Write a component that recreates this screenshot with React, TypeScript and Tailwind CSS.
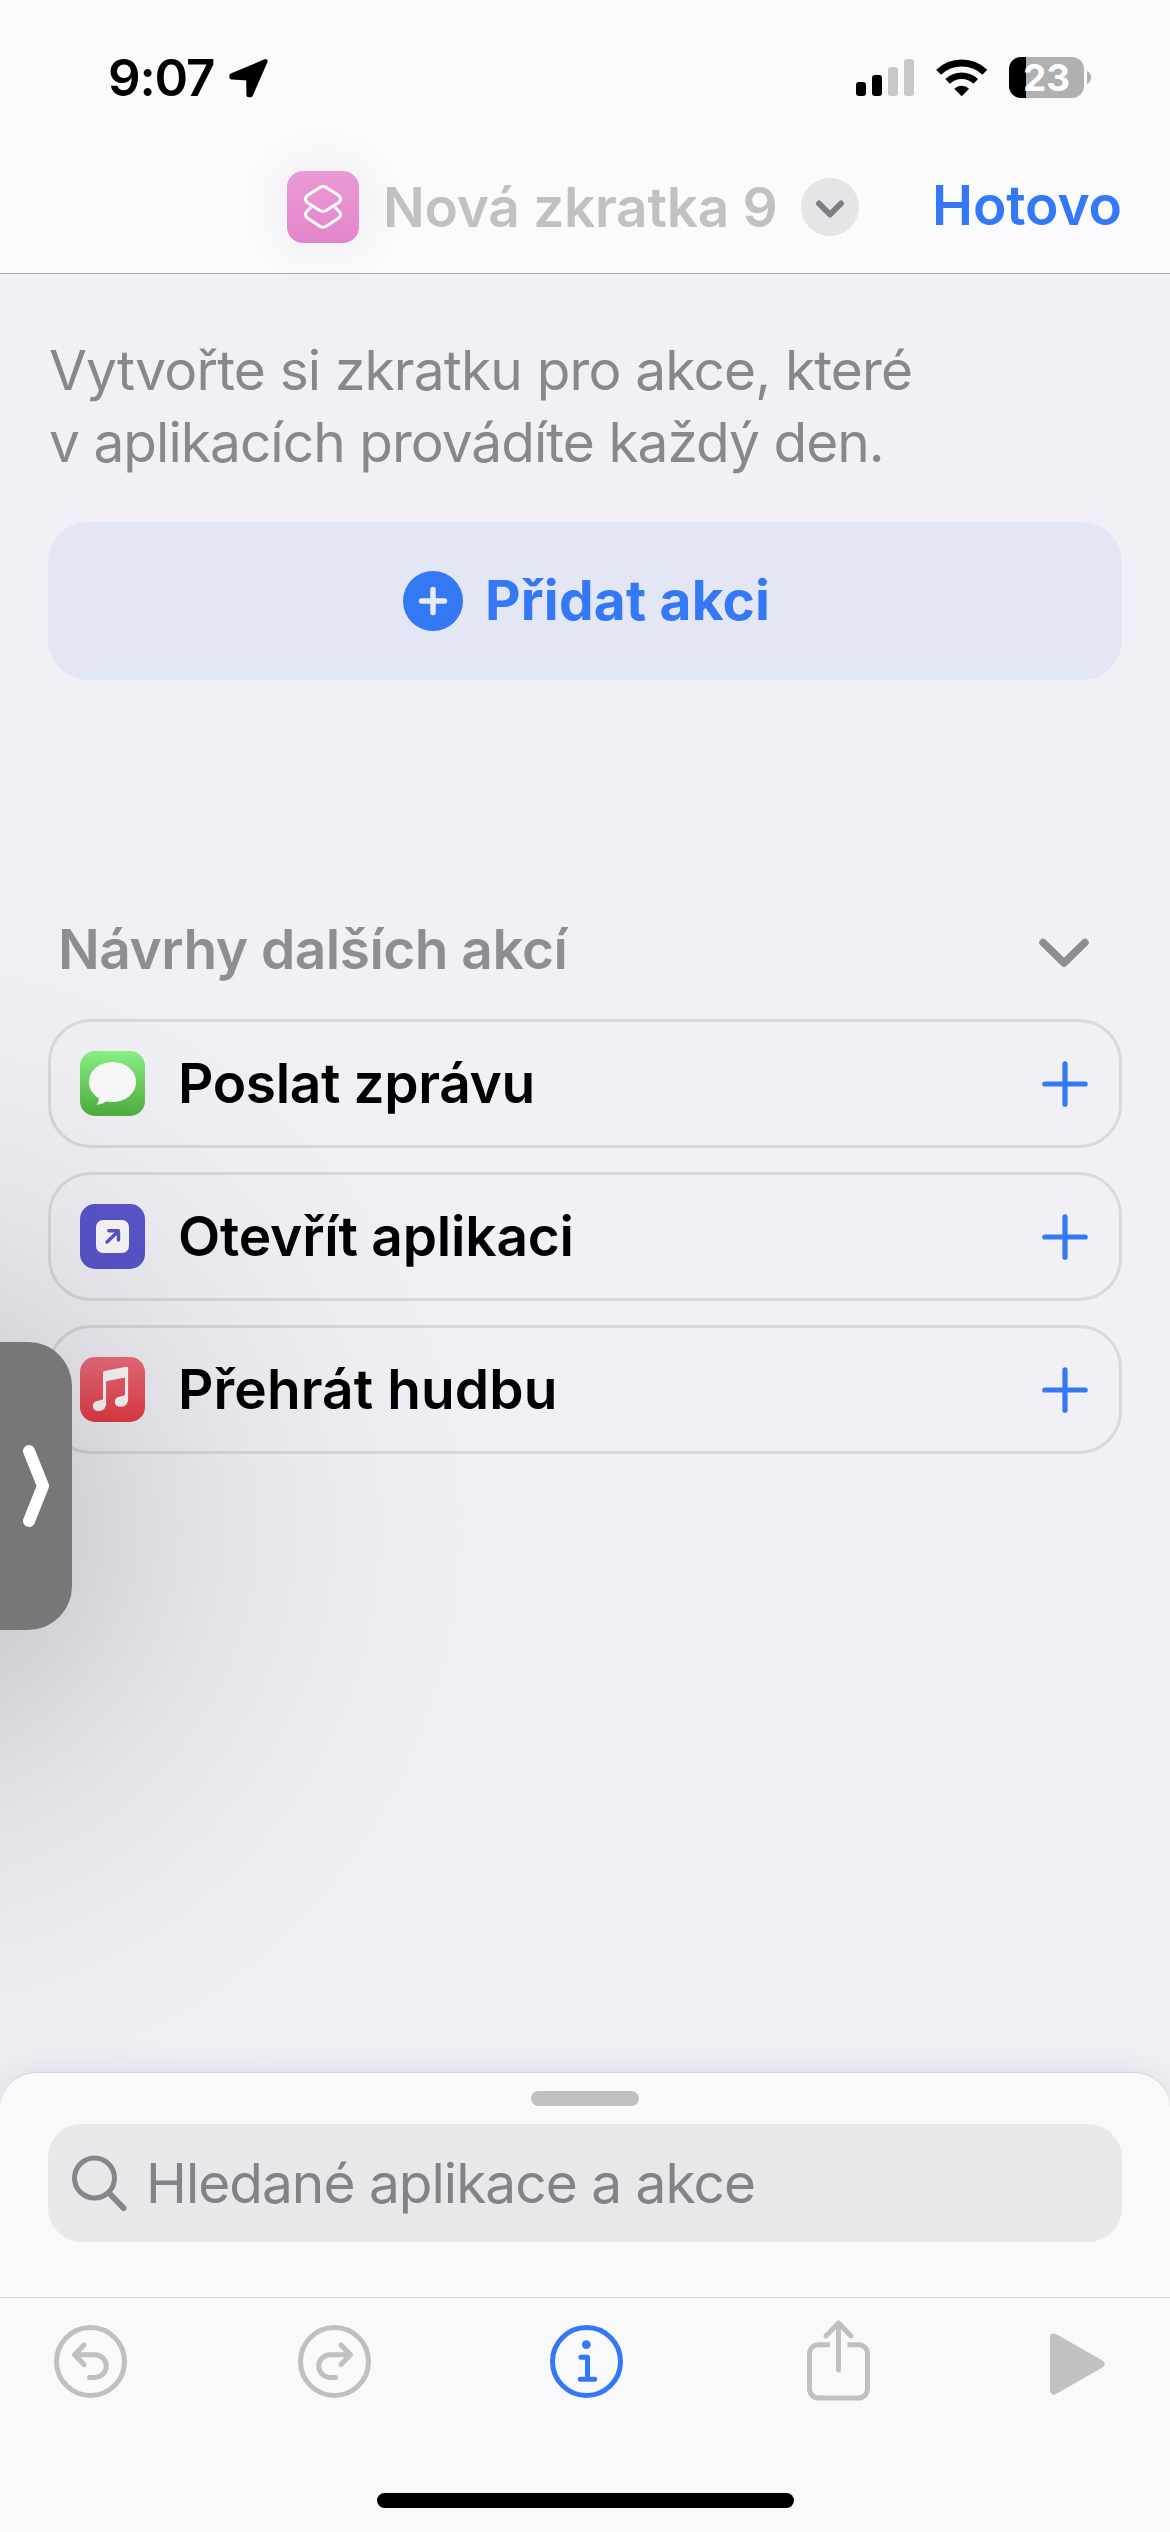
import React from 'react'

const suggestions = [
  { title: 'Poslat zprávu', icon: <MessagesIcon />, tracking: 'tracking-[-0.35px]' },
  { title: 'Otevřít aplikaci', icon: <OpenAppIcon />, tracking: 'tracking-[-0.2px]' },
  { title: 'Přehrát hudbu', icon: <MusicIcon />, tracking: 'tracking-[0.1px]' },
]

export default function App() {
  return (
    <div className="relative flex h-[2532px] w-[1170px] flex-col overflow-hidden bg-[#f1f0f6] font-[Inter,sans-serif] text-[55px] leading-[72px]">
      <Header />

      <main className="flex-1 px-12 pt-[60px]">
        <p className="whitespace-nowrap pl-px text-[#88878c]">
          <span className="block tracking-[-0.83px]">Vytvořte si zkratku pro akce, které</span>
          <span className="block tracking-[-0.97px]">v&nbsp;aplikacích provádíte každý den.</span>
        </p>

        <button className="mt-[44px] flex h-[158px] w-full items-center gap-[22px] rounded-[40px] bg-[#e2e6f5] pl-[355px]">
          <svg className="size-[60px]" viewBox="0 0 60 60" fill="none">
            <circle cx="30" cy="30" r="30" fill="#3478f6" />
            <path d="M30 18.5v23M18.5 30h23" stroke="#e8ecf8" strokeWidth="5.5" strokeLinecap="round" />
          </svg>
          <span className="-mt-[2px] font-bold tracking-[0.2px] text-[#3478f6]">Přidat akci</span>
        </button>

        <section className="mt-[233px]">
          <div className="flex items-center justify-between pr-[33px] pl-[10px]">
            <h2 className="font-semibold tracking-[-0.5px] text-[#8e8d92]">Návrhy dalších akcí</h2>
            <svg className="mt-[8px] h-[30px] w-[50px]" viewBox="0 0 50 30" fill="none">
              <path d="M4 4.5l21 20.5L46 4.5" stroke="#8e8d92" strokeWidth="7.5" strokeLinecap="round" strokeLinejoin="round" />
            </svg>
          </div>

          <div className="mt-[34px] flex flex-col gap-6">
            {suggestions.map((s) => (
              <div key={s.title} className="flex h-[129px] items-center rounded-[43px] border-3 border-[#d9d8de] pr-[31px] pl-[29px]">
                {s.icon}
                <span className={`-mt-[2px] ml-[33px] flex-1 font-semibold text-black ${s.tracking}`}>{s.title}</span>
                <svg className="size-[46px]" viewBox="0 0 46 46" fill="none">
                  <path d="M23 2.8v40.4M2.8 23h40.4" stroke="#3478f6" strokeWidth="5.2" strokeLinecap="round" />
                </svg>
              </div>
            ))}
          </div>
        </section>
      </main>

      {/* Wide soft shadow cast by the tab */}
      <div className="pointer-events-none absolute top-[826px] -left-[800px] size-[1400px] bg-[radial-gradient(circle_700px,rgba(0,0,0,0.165)_0px,rgba(0,0,0,0.155)_100px,rgba(0,0,0,0.12)_185px,rgba(0,0,0,0.085)_250px,rgba(0,0,0,0.06)_315px,rgba(0,0,0,0.047)_350px,rgba(0,0,0,0.023)_450px,rgba(0,0,0,0.011)_520px,rgba(0,0,0,0.004)_600px,transparent_700px)]" />

      {/* Collapsed picture-in-picture tab */}
      <div className="absolute top-[1342px] left-0 flex h-[288px] w-[72px] items-center justify-end rounded-r-[44px] bg-[#777779]">
        <svg className="mr-[20px] h-[90px] w-[32px]" viewBox="0 0 32 90" fill="none">
          <path d="M9 10l14 35L9 80" stroke="#fff" strokeWidth="12" strokeLinecap="round" strokeLinejoin="round" />
        </svg>
      </div>

      <BottomSheet />
    </div>
  )
}

function Header() {
  return (
    <header className="relative z-10 h-[274px] border-b border-[#a9a9ad] bg-[#fbfbfd]">
      <div className="flex h-[142px] items-start pt-[57px] pl-[108px]">
        <span className="-mt-[10px] w-[121px] text-[51px] leading-[62px] font-semibold tracking-[-1.18px] text-black">9:07</span>
        <svg className="mt-[2px] h-[40px] w-[40px]" viewBox="0 0 40 40">
          <path d="M36.4 2.3L2.6 16.6V18.4L19.4 19.2L19.6 36H21.6Z" fill="#000" stroke="#000" strokeWidth="4.4" strokeLinejoin="round" />
        </svg>
        <div className="ml-[587px] flex h-[39px] items-end gap-[6px]">
          <div className="h-[14px] w-[10px] rounded-[3px] bg-black" />
          <div className="h-[21px] w-[10px] rounded-[3px] bg-black" />
          <div className="h-[29px] w-[10px] rounded-[3px] bg-[#c8c8ca]" />
          <div className="h-[37px] w-[10px] rounded-[3px] bg-[#c8c8ca]" />
        </div>
        <svg className="mt-[2px] ml-[22px] h-[38px] w-[52px]" viewBox="0 0 52 38" fill="none" stroke="#000">
          <path d="M2.6 13.2a33.5 33.5 0 0 1 46.2 0" strokeWidth="7" />
          <path d="M11.6 22.4a20.5 20.5 0 0 1 28.2 0" strokeWidth="6.6" />
          <path d="M25.7 37.2l-7.4-7.4a10.6 10.6 0 0 1 14.8 0z" fill="#000" stroke="none" />
        </svg>
        <div className="ml-[21px] flex h-[41px] w-[75px] items-center justify-center rounded-[12px] bg-linear-to-r from-black from-[17px] to-[#b0b0b2] to-[17px]">
          <span className="text-[37px] leading-none font-bold text-white">23</span>
        </div>
        <svg className="mt-[14px] ml-[3px] h-[13px] w-[4px]" viewBox="0 0 4 13">
          <path d="M0 0C2.6 1 4 3.5 4 6.5S2.6 12 0 13z" fill="#b0b0b2" />
        </svg>
      </div>

      <div className="flex h-[130px] items-center pl-[287px]">
        <div className="size-[72px] rounded-[16px] bg-linear-to-b from-[#e99ad5] to-[#e485cb] shadow-[0_0_56px_rgba(0,0,0,0.09)]">
          <svg className="size-[72px]" viewBox="0 0 72 72" fill="none" stroke="#fff" strokeWidth="3">
            <path d="M32.4 16.7Q36 14.3 39.6 16.7L51.3 24.3Q56 28 51.3 31.7L39.6 39.2Q36 41.4 32.4 39.2L20.7 31.7Q16 28 20.7 24.3Z" />
            <path d="M24 36.3L20.7 39.6Q16 43.5 20.7 47.3L32.4 55Q36 57.4 39.6 55L51.3 47.3Q56 43.5 51.3 39.6L48 36.3" />
          </svg>
        </div>
        <h1 className="ml-[24px] w-[418px] font-semibold tracking-[-0.27px] whitespace-nowrap text-[#c1c1c4]">Nová zkratka 9</h1>
        <svg className="size-[58px]" viewBox="0 0 58 58" fill="none">
          <circle cx="29" cy="29" r="29" fill="#e5e5e7" />
          <path d="M18 25.5l11 11 11-11" stroke="#7e7e83" strokeWidth="6" strokeLinecap="round" strokeLinejoin="round" />
        </svg>
        <button className="-mt-[5px] ml-[73px] font-semibold tracking-[-0.1px] text-[#3478f6]">Hotovo</button>
      </div>
    </header>
  )
}

function BottomSheet() {
  return (
    <footer className="relative z-10 flex h-[460px] flex-col rounded-t-[36px] border-t border-[#d3d3d9] bg-[#f9f9f9] shadow-[0_0_36px_rgba(0,0,20,0.09)]">
      <div className="mx-auto mt-[18px] h-[15px] w-[108px] rounded-full bg-[#c0c0c2]" />

      <div className="mx-12 mt-[18px] flex h-[118px] items-center rounded-[34px] bg-[#e8e8ea] pl-[24px]">
        <svg className="h-[56px] w-[55px]" viewBox="0 0 55 56" fill="none" stroke="#85858a" strokeLinecap="round">
          <circle cx="22.5" cy="23" r="20" strokeWidth="5" />
          <path d="M37 38l14.5 15" strokeWidth="6" />
        </svg>
        <span className="ml-[19px] tracking-[-0.99px] text-[#838387]">Hledané aplikace a akce</span>
      </div>

      <div className="mt-[55px] flex flex-1 flex-col border-t border-[#d9d9db] bg-[#f9f9fb]">
        <nav className="mt-[23px] flex h-[81px] items-center pl-[54px]">
          <svg className="size-[73px]" viewBox="0 0 73 73" fill="none" stroke="#c0c0c1" strokeWidth="5" strokeLinecap="round" strokeLinejoin="round">
            <circle cx="36.5" cy="36.5" r="34" />
            <path d="M30 20L20.5 29.8L30 39.6M21 29.8H41a11.3 11.3 0 0 1 0 22.6H35.5" />
          </svg>
          <svg className="ml-[171px] size-[73px]" viewBox="0 0 73 73" fill="none" stroke="#c0c0c1" strokeWidth="5" strokeLinecap="round" strokeLinejoin="round">
            <circle cx="36.5" cy="36.5" r="34" />
            <path d="M43 20L52.5 29.8L43 39.6M52 29.8H32a11.3 11.3 0 0 0 0 22.6H37.5" />
          </svg>
          <svg className="ml-[179px] size-[73px]" viewBox="0 0 73 73" fill="none" stroke="#3478f6" strokeWidth="5" strokeLinecap="round" strokeLinejoin="round">
            <circle cx="36.5" cy="36.5" r="34" />
            <circle cx="36.3" cy="19.7" r="4.4" fill="#3478f6" stroke="none" />
            <path d="M31 32.2H37.5V54.3M30.3 54.3H44.7" />
          </svg>
          <svg className="-mt-[2px] ml-[184px] h-[81px] w-[63px]" viewBox="0 0 63 81" fill="none" stroke="#c0c0c1" strokeWidth="5">
            <path d="M31.5 50V3M19 16L31.5 3L44 16" strokeLinecap="round" strokeLinejoin="round" />
            <path d="M23 24.7H11.5a9 9 0 0 0-9 9V69a9 9 0 0 0 9 9h40a9 9 0 0 0 9-9V33.7a9 9 0 0 0-9-9H40.5" />
          </svg>
          <svg className="mt-[5px] ml-[180px] h-[62px] w-[55px]" viewBox="0 0 55 62">
            <path d="M4 4.5L50.5 31L4 57.5Z" fill="#c1c1c2" stroke="#c1c1c2" strokeWidth="8" strokeLinejoin="round" />
          </svg>
        </nav>
        <div className="mx-auto mt-[91px] h-[15px] w-[417px] rounded-full bg-black" />
      </div>
    </footer>
  )
}

function MessagesIcon() {
  return (
    <div className="size-[65px] rounded-[15px] bg-linear-to-b from-[#88f285] to-[#4fae3d]">
      <svg className="size-[65px]" viewBox="0 0 65 65" fill="#fafafa">
        <ellipse cx="32.5" cy="31" rx="23.6" ry="20" />
        <path d="M19 46c0 3.5-.8 5.7-2.6 7.8 4.2-.3 7.8-1.8 10.6-4.3z" />
      </svg>
    </div>
  )
}

function OpenAppIcon() {
  return (
    <div className="flex size-[65px] items-center justify-center rounded-[15px] bg-[#5a55cc]">
      <div className="size-[33px] rounded-[7px] bg-[#fbfafd]">
        <svg className="size-[33px]" viewBox="0 0 33 33" fill="none" stroke="#5a55cc" strokeWidth="3.4" strokeLinecap="round" strokeLinejoin="round">
          <path d="M11 22L22.5 11M12.8 10.8H22.5V20" />
        </svg>
      </div>
    </div>
  )
}

function MusicIcon() {
  return (
    <div className="size-[65px] rounded-[15px] bg-linear-to-b from-[#ee6c7d] to-[#e63a44]">
      <svg className="size-[65px]" viewBox="0 0 65 65" fill="#fdfbfc">
        <path d="M23 15.5q0-1.3 1.3-1.5L46.5 9.8q1.6-.2 1.6 1.3V44.500h-3.100V20.600L26.100 24.300V48.500H23z" />
        <path d="M48.100 41q0 8.800-7.300 8.800-6 0-6-5 0-4.800 6.200-5.600 4-.4 4-2z" />
        <path d="M26.100 45.200q0 8.800-7.300 8.800-6 0-6-5 0-4.800 6.200-5.600 4-.4 4-2z" />
      </svg>
    </div>
  )
}
